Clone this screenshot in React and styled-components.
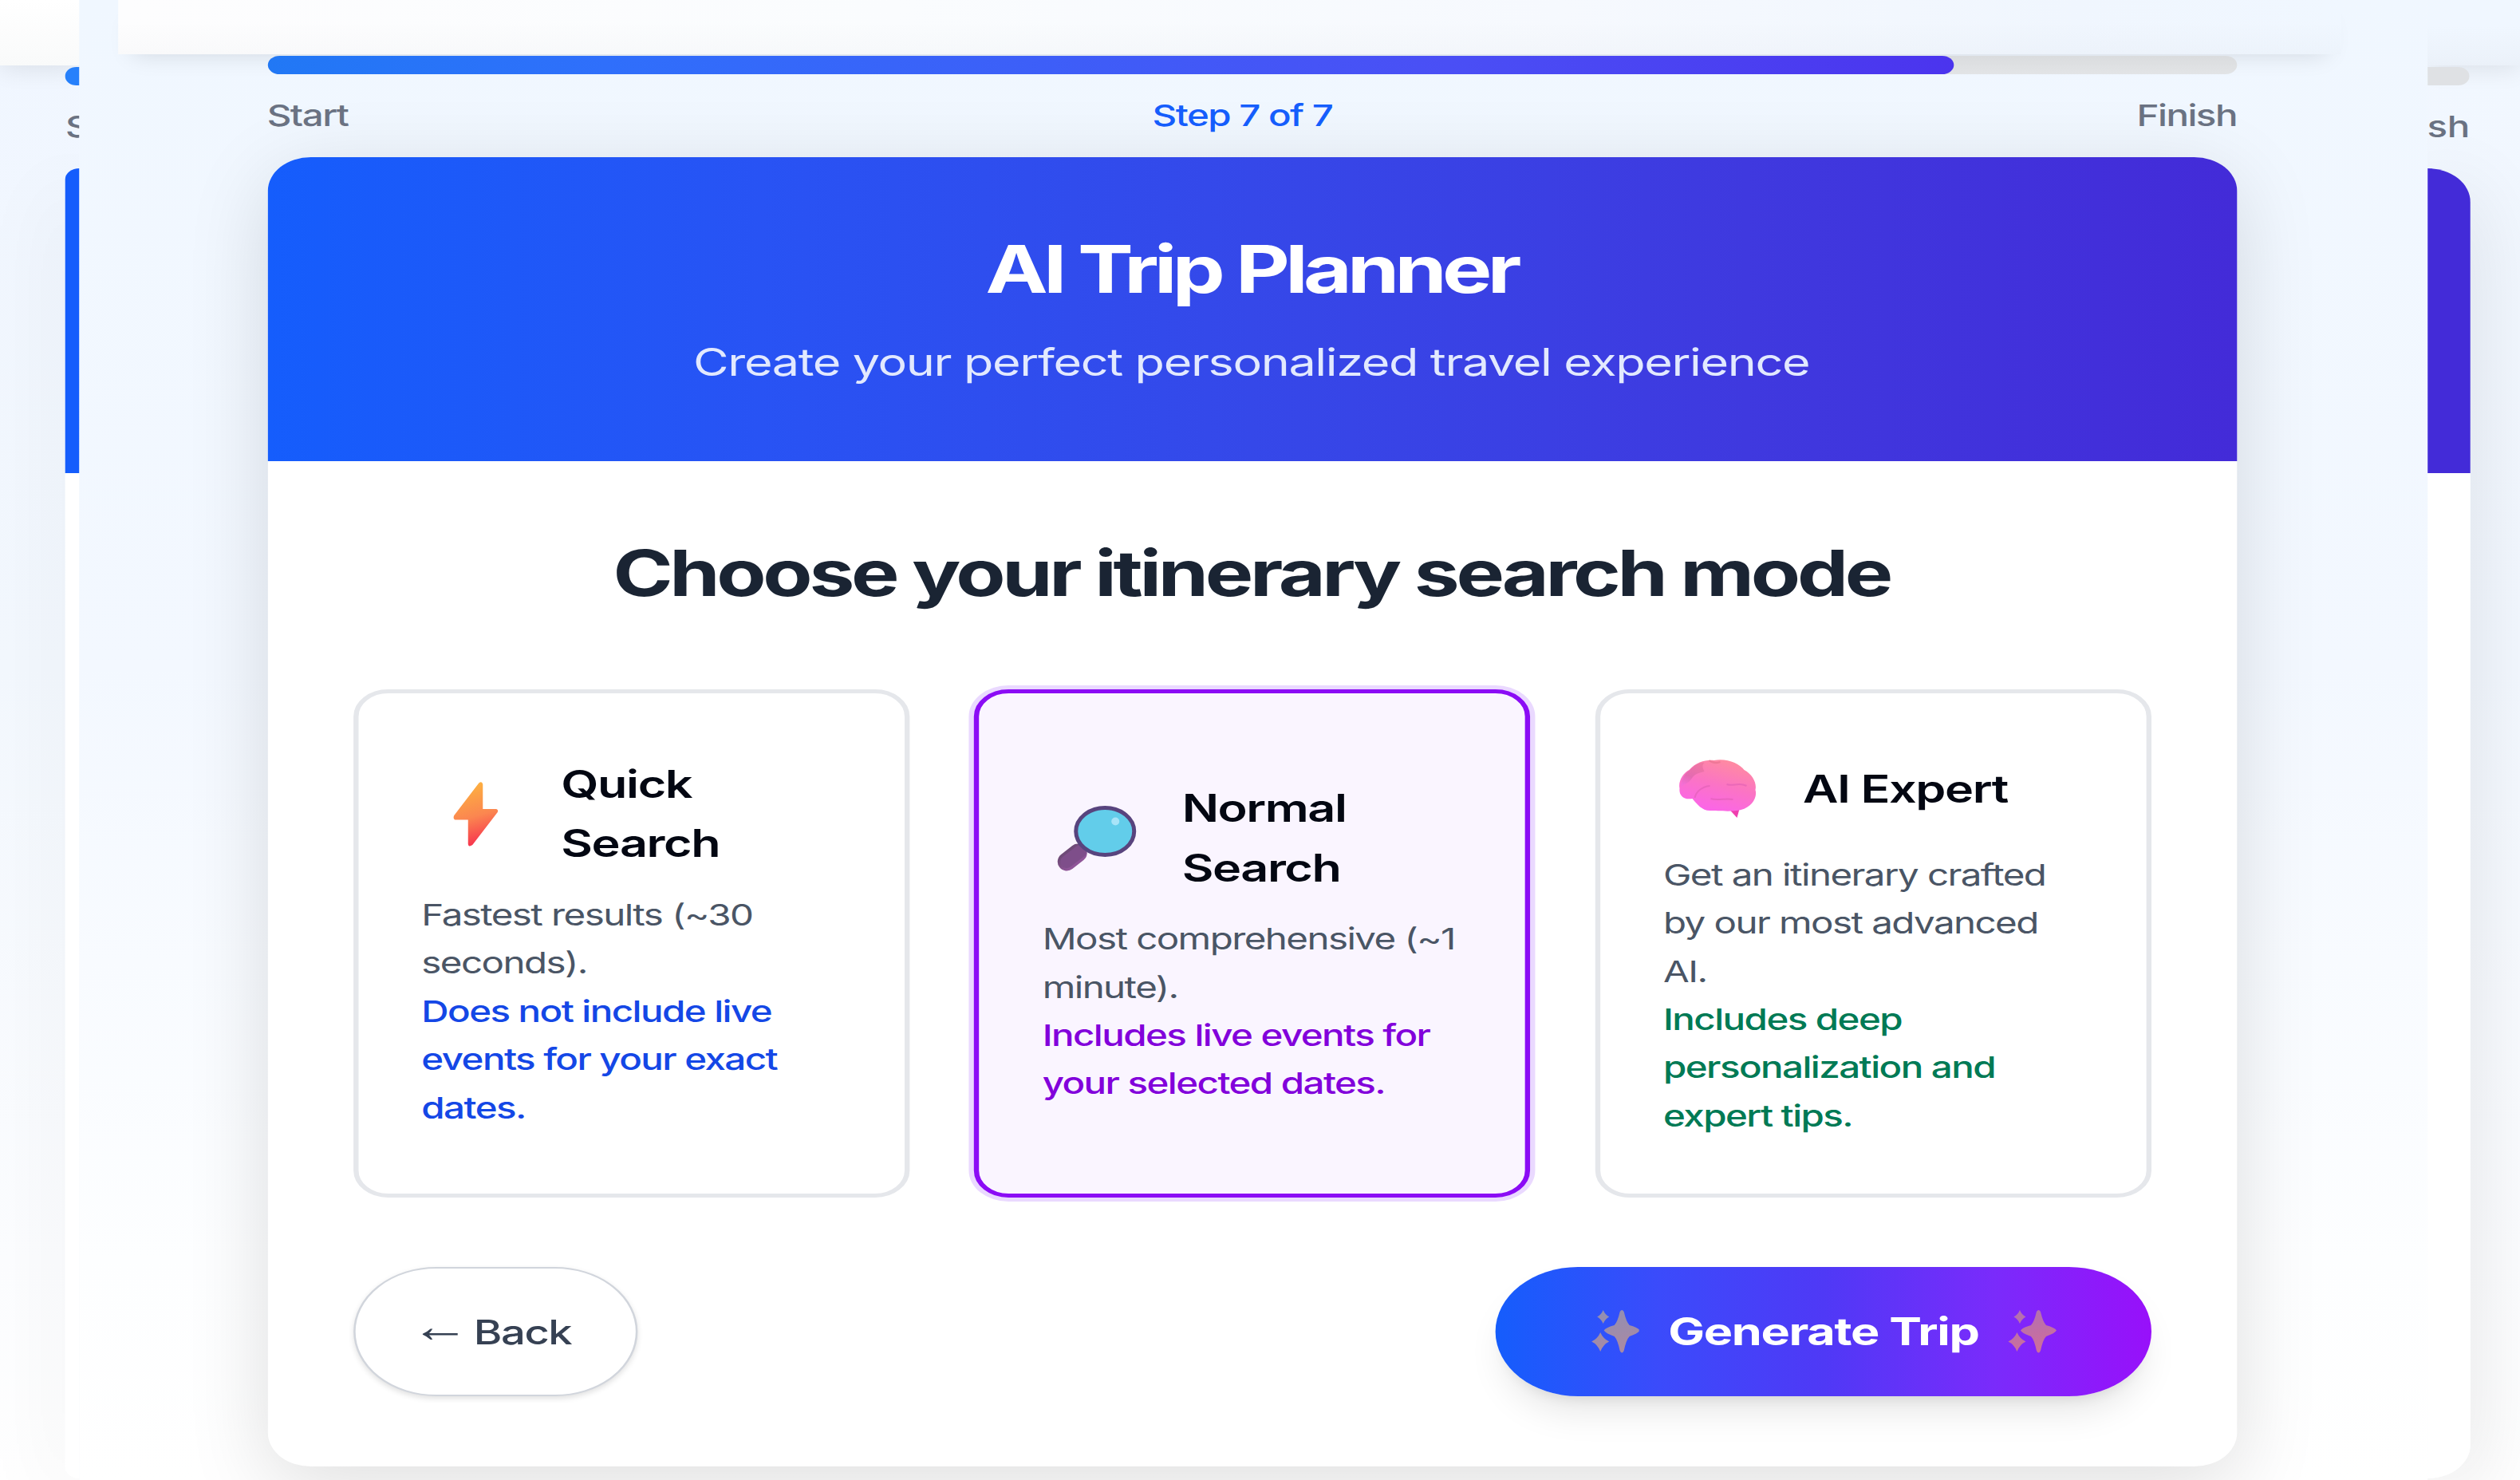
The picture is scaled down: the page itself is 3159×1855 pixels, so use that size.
import React from "react";
import styled, { createGlobalStyle } from "styled-components";

const STRETCH = 1.277;
const x = (px) => `${(px / STRETCH).toFixed(2)}px`;

const Global = createGlobalStyle`
  * { box-sizing: border-box; }
  html, body { margin: 0; padding: 0; }
  body { overflow: hidden; background: #f3f8ff; }
  h1, h2, h3, p { margin: 0; }
`;

const Viewport = styled.div`
  width: 3159px;
  height: 1855px;
  overflow: hidden;
`;

const Stage = styled.div`
  width: ${x(3159)};
  height: 1855px;
  display: grid;
  grid-template-columns: ${x(99)} ${x(2944)} ${x(116)};
  transform: scaleX(${STRETCH});
  transform-origin: 0 0;
  font-family: Inter, "Liberation Sans", sans-serif;
  overflow: hidden;
`;

/* Edge slices of the wider page */
const Edge = styled.div`
  height: 1855px;
  display: flex;
  flex-direction: column;
  align-items: ${(p) => (p.$right ? "flex-start" : "flex-end")};
  overflow: hidden;
  background: ${(p) =>
    p.$right
      ? "linear-gradient(180deg, #f1f7ff 0%, #f3f8ff 45%, #fcfdff 85%, #ffffff 100%)"
      : "linear-gradient(180deg, #f0f6ff 0%, #f3f8fe 45%, #fcfdff 85%, #ffffff 100%)"};
`;

const EdgeTop = styled.div`
  flex: none;
  width: 100%;
  height: 82px;
  background: ${(p) =>
    p.$right
      ? "linear-gradient(180deg, #f0f7ff 40%, #ebf1f9)"
      : "linear-gradient(180deg, #ffffff, #f9fafa)"};
  box-shadow: 0 5px 26px rgba(0, 0, 0, 0.09);
`;

const EdgeProgress = styled.div`
  flex: none;
  margin-top: 2px;
  height: 23px;
  width: ${(p) => (p.$right ? x(53) : x(17))};
  background: ${(p) => (p.$right ? "#dfe1e4" : "#2680fb")};
  border-radius: ${(p) => (p.$right ? "0 11px 11px 0" : "11px 0 0 11px")};
`;

const EdgeLabel = styled.div`
  flex: none;
  display: flex;
  justify-content: ${(p) => (p.$right ? "flex-end" : "flex-start")};
  width: ${(p) => (p.$right ? x(53) : x(17))};
  height: 53px;
  margin: 25px 0 26px;
  overflow: hidden;
  font-size: 37.2px;
  line-height: 53px;
  font-weight: 500;
  letter-spacing: -0.3px;
  color: #6a7282;
`;

const EdgeCard = styled.div`
  flex: none;
  width: ${(p) => (p.$right ? x(54) : x(17))};
  height: 1642px;
  border-radius: ${(p) => (p.$right ? "0 42px 42px 0" : "42px 0 0 42px")};
  background: linear-gradient(
    180deg,
    ${(p) => (p.$right ? "#432bd8" : "#155dfc")} 382px,
    #fff 382px
  );
  box-shadow: 0 24px 90px rgba(0, 0, 0, 0.14);
`;

/* Main page */
const Page = styled.main`
  position: relative;
  height: 1855px;
  overflow: hidden;
  display: flex;
  flex-direction: column;
  background: linear-gradient(180deg, #f0f7ff 0%, #f3f8ff 45%, #fdfeff 85%, #ffffff 100%);
`;

const NavBar = styled.div`
  flex: none;
  height: 68px;
  margin-left: ${x(49)};
  margin-right: ${x(109)};
  background: linear-gradient(180deg, rgba(0, 0, 0, 0) 40%, rgba(60, 70, 70, 0.02) 100%),
    linear-gradient(
      90deg,
      #fdfdfe 0%,
      #fafcfe 35%,
      #f6f9fe 65%,
      #f0f6fe 88%,
      rgba(240, 247, 255, 0) 100%
    );
  box-shadow: 0 14px 26px -14px rgba(0, 0, 0, 0.13);
`;

const Column = styled.div`
  flex: none;
  width: ${x(2468)};
  margin-left: ${x(237)};
  padding-top: 2px;
`;

const Track = styled.div`
  height: 23px;
  border-radius: 12px;
  background: linear-gradient(180deg, #dadcde, #e2e4e6);
`;

const Fill = styled.div`
  height: 100%;
  border-radius: 12px;
  background: linear-gradient(90deg, #2178f5 0%, #2f6ffb 20%, #4a4ff5 70%, #4b34ee 100%);
`;

const StepRow = styled.div`
  display: flex;
  justify-content: space-between;
  height: 53px;
  margin: 25px 0 26px -1px;
  font-size: 37.2px;
  line-height: 53px;
  font-weight: 500;
  letter-spacing: -1.2px;
  color: #6a7282;
`;

const StepNow = styled.span`
  color: #155dfc;
`;

const Card = styled.section`
  height: 1641px;
  border-radius: 42px;
  background: #fff;
  box-shadow: 0 24px 90px rgba(0, 0, 0, 0.13);
`;

const Banner = styled.header`
  height: 381px;
  border-radius: 42px 42px 0 0;
  padding-top: 92px;
  text-align: center;
  color: #fff;
  background: linear-gradient(
    90deg,
    #155dfc 0%,
    #2853f4 25%,
    #3548e9 50%,
    #3f39df 75%,
    #432bd8 100%
  );
`;

const BannerTitle = styled.h1`
  margin-left: -2px;
  font-size: 82px;
  line-height: 98px;
  font-weight: 700;
  letter-spacing: -4.45px;
`;

const BannerText = styled.p`
  margin-top: 30px;
  margin-left: -2px;
  font-size: 47.8px;
  line-height: 74px;
  letter-spacing: -1.05px;
  color: #e2e9fe;
`;

const Body = styled.div`
  padding: 84px ${x(107)} 0;
`;

const Heading = styled.h2`
  margin-left: -2px;
  text-align: center;
  font-size: 79.6px;
  line-height: 112px;
  font-weight: 700;
  letter-spacing: -3.35px;
  color: #1a2433;
`;

const Modes = styled.div`
  display: grid;
  grid-template-columns: repeat(3, minmax(0, 1fr));
  gap: ${x(81)};
  margin-top: 90px;
`;

const Mode = styled.article`
  height: 637px;
  display: flex;
  flex-direction: column;
  justify-content: center;
  padding: 0 ${x(79)};
  border: 5.3px solid ${(p) => (p.$active ? "#8b0cf5" : "#e5e7eb")};
  border-radius: 34px;
  background: ${(p) => (p.$active ? "#faf5ff" : "#fff")};
  box-shadow: ${(p) => (p.$active ? "0 0 0 5px #ead9ff" : "none")};
`;

const ModeHead = styled.div`
  display: flex;
  align-items: center;
  min-height: ${(p) => (p.$single ? "106px" : "149px")};
  margin-bottom: ${(p) => (p.$single ? "25px" : "22px")};
`;

const IconBox = styled.span`
  flex: none;
  width: ${x(136)};
  margin-right: ${x(39)};
  display: flex;
  justify-content: center;
`;

const ModeTitle = styled.h3`
  font-size: 47.8px;
  line-height: 74.4px;
  font-weight: 600;
  letter-spacing: -1.1px;
  color: #030712;
`;

const ModeText = styled.p`
  font-size: 37.2px;
  line-height: 60.4px;
  font-weight: ${(p) => (p.$tone ? 500 : 400)};
  letter-spacing: -1.23px;
  color: ${(p) => p.$tone || "#4a5565"};
  white-space: nowrap;
`;

const Actions = styled.div`
  display: flex;
  justify-content: space-between;
  margin-top: 87px;
`;

const BackButton = styled.button`
  width: ${x(357)};
  height: 162px;
  display: flex;
  align-items: center;
  justify-content: center;
  gap: ${x(5)};
  padding: 0 ${x(12)} 0 0;
  border: 2.7px solid #d1d5dc;
  border-radius: 82px;
  background: #fff;
  box-shadow: 0 3px 7px rgba(0, 0, 0, 0.12);
  font: 500 42.5px Inter, "Liberation Sans", sans-serif;
  letter-spacing: -1.1px;
  color: #364153;
  white-space: nowrap;
`;

const Arrow = styled.span`
  padding-bottom: 14px;
  font-family: "Liberation Sans", sans-serif;
  font-size: 58px;
  line-height: 50px;
  font-weight: 400;
  letter-spacing: 0;
`;

const GenerateButton = styled.button`
  width: ${x(822)};
  height: 162px;
  display: flex;
  align-items: center;
  justify-content: center;
  gap: ${x(36)};
  padding: 0;
  border: 0;
  border-radius: 82px;
  background: linear-gradient(
    90deg,
    #155dfc 0%,
    #3b4bfb 25%,
    #4f39f6 50%,
    #7a2bfb 76%,
    #9810fa 100%
  );
  box-shadow: 0 26px 40px -8px rgba(0, 0, 0, 0.1), 0 10px 16px -10px rgba(0, 0, 0, 0.12);
  font: 700 47.8px Inter, "Liberation Sans", sans-serif;
  letter-spacing: -1px;
  color: #fff;
  white-space: nowrap;
`;

const Drawing = styled.svg`
  display: block;
  flex: none;
`;

const Bolt = () => (
  <Drawing width={56 / STRETCH} height="81" viewBox="0 0 56 81" preserveAspectRatio="none">
    <defs>
      <linearGradient id="bolt" x1="0.3" y1="0" x2="0.5" y2="1">
        <stop offset="0" stopColor="#fdb43f" />
        <stop offset="0.55" stopColor="#fb8650" />
        <stop offset="1" stopColor="#f7314e" />
      </linearGradient>
    </defs>
    <path
      d="M32 1.5 Q36-1.5 37 3 V34 H54 Q57 35 55.500 38 L24 79 Q18 83 18.500 76 V47.500 H2 Q-1 46 1 42 Z"
      fill="url(#bolt)"
    />
  </Drawing>
);

const Magnifier = () => (
  <Drawing width={100 / STRETCH} height="82" viewBox="0 0 100 82" preserveAspectRatio="none">
    <defs>
      <linearGradient id="handle" x1="0" y1="0" x2="1" y2="1">
        <stop offset="0" stopColor="#6f4a78" />
        <stop offset="1" stopColor="#8f5598" />
      </linearGradient>
    </defs>
    <path d="M13 70 L27 59" stroke="url(#handle)" strokeWidth="23" strokeLinecap="round" />
    <path d="M13 70 L30 57" stroke="#7e4e8a" strokeWidth="16" strokeLinecap="round" />
    <ellipse cx="61" cy="32" rx="36.500" ry="29.500" fill="#62cdea" stroke="#58447e" strokeWidth="5" />
    <circle cx="74" cy="19.500" r="5" fill="#a8e4f8" />
  </Drawing>
);

const Brain = () => (
  <Drawing width={98 / STRETCH} height="73" viewBox="0 0 98 73" preserveAspectRatio="none">
    <defs>
      <linearGradient id="brain" x1="0.75" y1="0" x2="0.35" y2="1">
        <stop offset="0" stopColor="#ff8d9d" />
        <stop offset="0.5" stopColor="#fb74c4" />
        <stop offset="1" stopColor="#fb64ea" />
      </linearGradient>
      <linearGradient id="lobe" x1="0.7" y1="0" x2="0.3" y2="1">
        <stop offset="0" stopColor="#e8709c" />
        <stop offset="0.6" stopColor="#d765a8" />
        <stop offset="1" stopColor="#f06fd8" />
      </linearGradient>
    </defs>
    <path d="M62 61 L73 73 L76 62 Z" fill="#ef3fae" />
    <path
      d="M17 49 C5 51 0 44 1 36 C-1 28 5 17 13 13 C22 3 34 0 44 1 C60-2 76 5 82 13 C93 19 98 30 96 38 C99 48 91 60 78 63 C68 66 48 64 39 64 C29 64 23 56 17 49 Z"
      fill="url(#brain)"
    />
    <path
      d="M3 34 C3 24 8 17 14 13 C20 6 28 3 32 4 C28 8 31 12 32 15 C24 17 20 18 16 24 C12 30 8 30 3 34 Z"
      fill="url(#lobe)"
      opacity="0.65"
    />
    <path
      d="M20 48 C22 39 30 34 39 33 M40 49 C48 52 59 48 68 50 M60 31 C68 34 75 28 85 33"
      fill="none"
      stroke="#e05fb4"
      strokeWidth="2"
      opacity="0.6"
    />
    <path d="M38 1 Q44 6 52 3" fill="none" stroke="#e4708c" strokeWidth="2" opacity="0.6" />
  </Drawing>
);

const Sparkles = ({ from, to, id }) => (
  <Drawing width={61 / STRETCH} height="54" viewBox="0 0 61 54" preserveAspectRatio="none">
    <defs>
      <linearGradient id={id} x1="0" y1="0" x2="0.3" y2="1">
        <stop offset="0" stopColor={from} />
        <stop offset="1" stopColor={to} />
      </linearGradient>
    </defs>
    <path
      d="M36 2 Q38.500-2 41 2 Q44 15 48 19 Q59 22 61 25.500 Q59 29 48 33 Q44 37 41 51 Q38.500 56 36 51 Q33 37 29 33 Q18 29 16 25.500 Q18 22 29 19 Q33 15 36 2 Z M15 0 Q17.500 6 22.500 8.500 Q17.500 11 15 17 Q12.500 11 7.500 8.500 Q12.500 6 15 0 Z M11.500 28 Q15 36 22.500 39.500 Q15 43 11.500 52 Q8 43 0.500 39.500 Q8 36 11.500 28 Z"
      fill={`url(#${id})`}
    />
  </Drawing>
);

export default function App() {
  return (
    <Viewport>
      <Global />
      <Stage>
        <Edge>
          <EdgeTop />
          <EdgeProgress />
          <EdgeLabel>S</EdgeLabel>
          <EdgeCard />
        </Edge>

        <Page>
          <NavBar />
          <Column>
            <Track>
              <Fill style={{ width: `${(6 / 7) * 99.9}%` }} />
            </Track>
            <StepRow>
              <span>Start</span>
              <StepNow>Step 7 of 7</StepNow>
              <span>Finish</span>
            </StepRow>
            <Card>
              <Banner>
                <BannerTitle>AI Trip Planner</BannerTitle>
                <BannerText>Create your perfect personalized travel experience</BannerText>
              </Banner>
              <Body>
                <Heading>Choose your itinerary search mode</Heading>
                <Modes>
                  <Mode>
                    <ModeHead>
                      <IconBox><Bolt /></IconBox>
                      <ModeTitle>Quick<br />Search</ModeTitle>
                    </ModeHead>
                    <ModeText>Fastest results (~30<br />seconds).</ModeText>
                    <ModeText $tone="#1447e6">
                      Does not include live<br />events for your exact<br />dates.
                    </ModeText>
                  </Mode>
                  <Mode $active>
                    <ModeHead>
                      <IconBox><Magnifier /></IconBox>
                      <ModeTitle>Normal<br />Search</ModeTitle>
                    </ModeHead>
                    <ModeText>Most comprehensive (~1<br />minute).</ModeText>
                    <ModeText $tone="#8200db">
                      Includes live events for<br />your selected dates.
                    </ModeText>
                  </Mode>
                  <Mode>
                    <ModeHead $single>
                      <IconBox><Brain /></IconBox>
                      <ModeTitle>AI Expert</ModeTitle>
                    </ModeHead>
                    <ModeText>Get an itinerary crafted<br />by our most advanced<br />AI.</ModeText>
                    <ModeText $tone="#007a55">
                      Includes deep<br />personalization and<br />expert tips.
                    </ModeText>
                  </Mode>
                </Modes>
                <Actions>
                  <BackButton>
                    <Arrow>←</Arrow>
                    <span>Back</span>
                  </BackButton>
                  <GenerateButton>
                    <Sparkles id="sparkLeft" from="#8f8fb4" to="#a88aa4" />
                    <span>Generate Trip</span>
                    <Sparkles id="sparkRight" from="#b070b4" to="#cc6e9c" />
                  </GenerateButton>
                </Actions>
              </Body>
            </Card>
          </Column>
        </Page>

        <Edge $right>
          <EdgeTop $right />
          <EdgeProgress $right />
          <EdgeLabel $right>sh</EdgeLabel>
          <EdgeCard $right />
        </Edge>
      </Stage>
    </Viewport>
  );
}
